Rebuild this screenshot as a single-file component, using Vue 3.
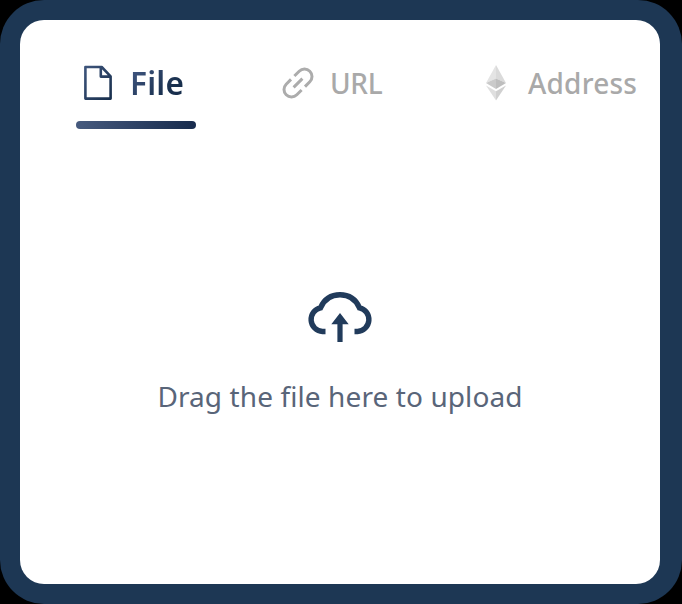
<script setup>
import { ref } from 'vue'

const active = ref('file')
const tabs = [
  { id: 'file', label: 'File' },
  { id: 'url', label: 'URL' },
  { id: 'address', label: 'Address' },
]
</script>

<template>
  <main class="frame">
    <section class="card">
      <nav class="tabs">
        <button
          v-for="tab in tabs"
          :key="tab.id"
          type="button"
          :class="['tab', 'tab-' + tab.id, { active: active === tab.id }]"
          @click="active = tab.id"
        >
          <svg v-if="tab.id === 'file'" class="icon" width="32" height="38" viewBox="0 0 32 38" fill="none">
            <defs>
              <linearGradient id="ink" x1="0" y1="0" x2="1" y2="1">
                <stop offset="0" stop-color="#3d547b" />
                <stop offset="1" stop-color="#182f4d" />
              </linearGradient>
            </defs>
            <path
              d="M3.4 3H19.7L28.6 12.3V34.6H3.4ZM18.8 3V12.6H28.5"
              stroke="url(#ink)"
              stroke-width="2.6"
              stroke-linejoin="round"
            />
          </svg>
          <svg v-else-if="tab.id === 'url'" class="icon" width="32" height="32" viewBox="0 0 32 32" fill="none">
            <g transform="rotate(-45 16 16)" stroke="#acacac" stroke-width="3">
              <path d="M13.6 8.5H6.8A7.5 7.5 0 0 0 6.8 23.5H13.6M18.4 8.5H25.2A7.5 7.5 0 0 1 25.2 23.5H18.4M9.8 16H22.2" />
            </g>
          </svg>
          <svg v-else class="icon" width="22" height="36" viewBox="0 0 22 36">
            <path d="M11 0L1 18L11 13.5Z" fill="#e4e4e4" />
            <path d="M11 0L21 18L11 13.5Z" fill="#dadada" />
            <path d="M1 18L11 13.5V24Z" fill="#cacaca" />
            <path d="M21 18L11 13.5V24Z" fill="#bebebe" />
            <path d="M1 20.5L11 26.2V35.5Z" fill="#dfdfdf" />
            <path d="M21 20.5L11 26.2V35.5Z" fill="#d0d0d0" />
          </svg>
          <span class="label">{{ tab.label }}</span>
        </button>
      </nav>
      <div class="dropzone">
        <svg class="cloud" width="66" height="52" viewBox="0 0 66 52">
          <path
            d="M18.5 40.5H15.5A12 12 0 0 1 13.5 16.8C17 8.8 24 3.8 33 3.8S49 8.8 52.5 16.8A12 12 0 0 1 50.5 40.5H47.5"
            fill="none"
            stroke="#213b5b"
            stroke-width="5.4"
          />
          <path d="M33 22L41.7 33.2H35.6V51H30.4V33.2H24.3Z" fill="#213b5b" />
        </svg>
        <p class="hint">Drag the file here to upload</p>
      </div>
    </section>
  </main>
</template>

<style>
body {
  margin: 0;
  background: #000;
}
</style>

<style scoped>
.frame {
  box-sizing: border-box;
  width: 682px;
  height: 604px;
  padding: 20px 22px 20px 20px;
  border-radius: 44px;
  background: #1d3754;
  font-family: 'Noto Sans', sans-serif;
}
.card {
  box-sizing: border-box;
  height: 564px;
  padding: 35px 0 0 56px;
  border-radius: 24px;
  background: #fff;
  overflow: hidden;
}
.tabs {
  display: flex;
}
.tab {
  display: flex;
  box-sizing: border-box;
  align-items: center;
  flex: none;
  height: 74px;
  padding: 0 0 18px;
  border: 0;
  background: none;
  color: #a9a9a9;
  font: 500 28px/40px 'Noto Sans', sans-serif;
  white-space: nowrap;
}
.tab-file {
  position: relative;
  width: 120px;
  padding-left: 6px;
  font-size: 31.5px;
  font-weight: 600;
  letter-spacing: 0.2px;
}
.tab-file .label {
  margin-left: 16px;
}
.tab-file.active .label {
  background: linear-gradient(135deg, #465c88, #182f4d 70%);
  background-clip: text;
  color: transparent;
}
.tab.active::after {
  position: absolute;
  right: 0;
  bottom: 0;
  left: 0;
  height: 8px;
  border-radius: 4px;
  background: linear-gradient(90deg, #465a7e, #172b4d);
  content: '';
}
.tab-url {
  margin-left: 86px;
  width: 104px;
}
.tab-url .label {
  margin-left: 16px;
  letter-spacing: -0.3px;
}
.tab-address {
  margin-left: 99px;
}
.tab-address .label {
  margin-left: 21px;
  letter-spacing: 0.2px;
}
.icon {
  flex: none;
}
.dropzone {
  display: flex;
  flex-direction: column;
  align-items: center;
  margin-left: -56px;
  padding-top: 162px;
}
.cloud {
  display: block;
}
.hint {
  margin: 33px 0 0;
  color: #596579;
  font-size: 28px;
  line-height: 40px;
  letter-spacing: 0.1px;
  white-space: nowrap;
}
</style>
